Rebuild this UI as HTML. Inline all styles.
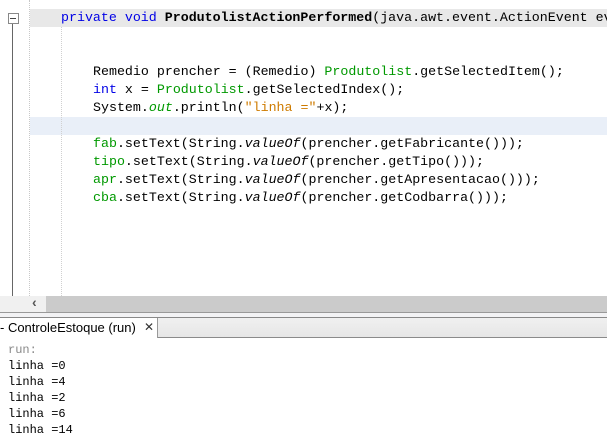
<!DOCTYPE html>
<html><head><style>
body{margin:0;width:607px;height:448px;overflow:hidden;background:#fff;position:relative;}
.m{font-family:"Liberation Mono","Courier New",Courier,"DejaVu Sans Mono",monospace;}
.l{position:absolute;white-space:pre;font-size:13.3px;line-height:18px;color:#000;font-family:"Liberation Mono","Courier New",Courier,"DejaVu Sans Mono",monospace;}
.k{color:#0000e6}.g{color:#009900}.o{color:#ce7b00}.i{font-style:italic}
.gi{color:#009900;font-style:italic}
</style></head><body>
<div style="position:absolute;left:30px;top:9px;width:577px;height:18px;background:#e8e8e8"></div>
<div style="position:absolute;left:30px;top:117px;width:577px;height:18px;background:#e9eff8"></div>
<div style="position:absolute;left:29px;top:0;height:296px;border-left:1px dotted #c8c8c8"></div>
<div style="position:absolute;left:61px;top:27px;height:269px;border-left:1px dotted #d0d0d0"></div>
<div style="position:absolute;left:8px;top:13px;width:9px;height:9px;border:1px solid #888;background:#fff"></div>
<div style="position:absolute;left:10px;top:18px;width:6px;height:1px;background:#444"></div>
<div style="position:absolute;left:12px;top:24px;width:1px;height:272px;background:#666"></div>
<div class="l" style="left:61px;top:9px"><span class="k">private</span> <span class="k">void</span> <b>ProdutolistActionPerformed</b>(java.awt.event.ActionEvent ev</div>
<div class="l" style="left:93px;top:63px">Remedio prencher = (Remedio) <span class="g">Produtolist</span>.getSelectedItem();</div>
<div class="l" style="left:93px;top:81px"><span class="k">int</span> x = <span class="g">Produtolist</span>.getSelectedIndex();</div>
<div class="l" style="left:93px;top:99px">System.<span class="gi">out</span>.println(<span class="o">"linha ="</span>+x);</div>
<div class="l" style="left:93px;top:135px"><span class="g">fab</span>.setText(String.<span class="i">valueOf</span>(prencher.getFabricante()));</div>
<div class="l" style="left:93px;top:153px"><span class="g">tipo</span>.setText(String.<span class="i">valueOf</span>(prencher.getTipo()));</div>
<div class="l" style="left:93px;top:171px"><span class="g">apr</span>.setText(String.<span class="i">valueOf</span>(prencher.getApresentacao()));</div>
<div class="l" style="left:93px;top:189px"><span class="g">cba</span>.setText(String.<span class="i">valueOf</span>(prencher.getCodbarra()));</div>
<div style="position:absolute;left:0;top:296px;width:607px;height:16px;background:#f0f0f0"></div>
<div style="position:absolute;left:46px;top:296px;width:561px;height:16px;background:#cbcbcb"></div>
<div style="position:absolute;left:32px;top:294px;font:bold 14px 'Liberation Sans',sans-serif;color:#555">&lsaquo;</div>
<div style="position:absolute;left:0;top:312px;width:607px;height:1px;background:#999"></div>
<div style="position:absolute;left:0;top:313px;width:607px;height:4px;background:#f2f2f4"></div>
<div style="position:absolute;left:0;top:317px;width:607px;height:1px;background:#888"></div>
<div style="position:absolute;left:0;top:318px;width:607px;height:19px;background:linear-gradient(#f0f0f0,#e6e6e6)"></div>
<div style="position:absolute;left:0;top:337px;width:607px;height:1px;background:#8a8a8a"></div>
<div style="position:absolute;left:0;top:318px;width:157px;height:20px;background:#fff;border-right:1px solid #999"></div>
<div style="position:absolute;left:0;top:320px;font:13px 'Liberation Sans',sans-serif;color:#000">- ControleEstoque (run)</div>
<div style="position:absolute;left:144px;top:320px;font:12px 'DejaVu Sans',sans-serif;color:#333">&#x2715;</div>
<div class="m" style="position:absolute;left:8px;top:342px;font-size:12px;line-height:16px;white-space:pre;color:#000;"><span style="color:#888">run:</span>
linha =0
linha =4
linha =2
linha =6
linha =14</div>
</body></html>
